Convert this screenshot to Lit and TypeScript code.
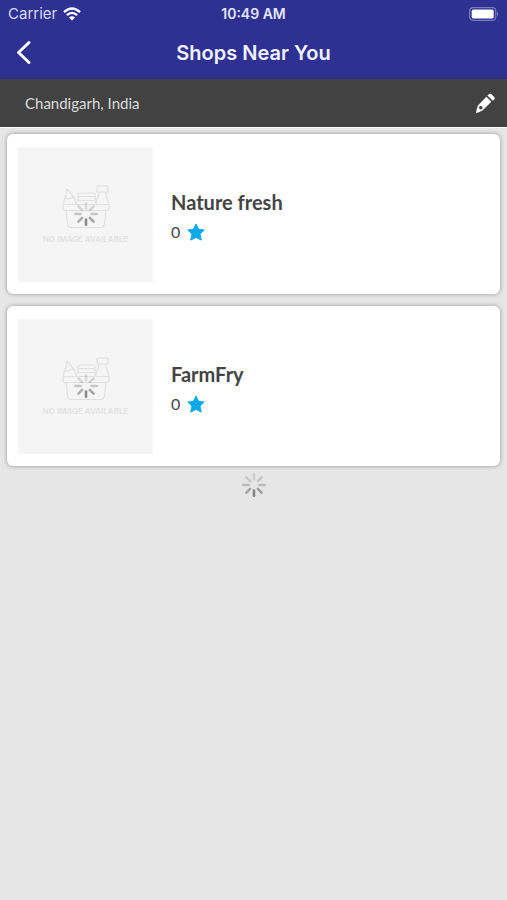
import { LitElement, html, css, svg } from "lit";
import { customElement, property, state } from "lit/decorators.js";

@customElement("activity-spinner")
class ActivitySpinner extends LitElement {
  static styles = css`
    :host {
      display: block;
      width: 26px;
      height: 26px;
    }
    svg {
      display: block;
      width: 100%;
      height: 100%;
    }
  `;

  render() {
    const shades = [0.12, 0.16, 0.22, 0.38, 0.5, 0.34, 0.22, 0.15];
    return html`<svg viewBox="-13 -13 26 26" role="img" aria-label="Loading">
      ${shades.map(
        (o, i) => svg`<path d="M0-5.5V-10.7" transform=${`rotate(${i * 45})`}
          stroke="#222" stroke-opacity=${o} stroke-width="2.6" stroke-linecap="round"/>`
      )}
    </svg>`;
  }
}

@customElement("image-placeholder")
class ImagePlaceholder extends LitElement {
  static styles = css`
    :host {
      display: grid;
      place-items: center;
      box-sizing: border-box;
      width: 135px;
      height: 135px;
      background: #f5f5f5;
    }
    .content {
      position: relative;
      display: flex;
      flex-direction: column;
      align-items: center;
      gap: 4px;
    }
    .basket {
      display: block;
      width: 48px;
      height: 44px;
    }
    .caption {
      font: 600 8px/12px Inter, sans-serif;
      color: #e2e2e2;
      white-space: nowrap;
    }
    activity-spinner {
      position: absolute;
      top: 16px;
      left: calc(50% - 13px);
    }
  `;

  render() {
    return html`<div class="content">
      <svg class="basket" viewBox="0 0 48 44" fill="none" stroke="#e0e0e0" stroke-width="1.2" stroke-linejoin="round" aria-hidden="true">
        <path d="M2 19.500h44q1 0 1 1.500v2.500q0 2-1.500 2H2.500q-1.500 0-1.500-2V21q0-1.500 1-1.500z"/>
        <path d="M4 25.500l1.500 13q.5 4 4 4h29q3.500 0 4-4l1.500-13"/>
        <path d="M14 19.500q0-4 3-4h14q3 0 3 4"/>
        <path d="M16 15.500v-6q0-1.500 1.500-1.500h14q1.500 0 1.500 1.500v6M16 11.500h17"/>
        <path d="M36 1h9q1 0 1 1v4q0 1-1 1h-9q-1 0-1-1V2q0-1 1-1zM36.500 7v4q-2 2.500-3 8.500M44 7v4q2 2.500 3 8.500"/>
        <path d="M1.500 19.500q0-4 1.500-6.500 1.500-4 2-9 3 2.500 5 6 3.500 3.500 4 9.500M3 13q3 2 8-1"/>
      </svg>
      <span class="caption">NO IMAGE AVAILABLE</span>
      <activity-spinner></activity-spinner>
    </div>`;
  }
}

@customElement("shop-card")
class ShopCard extends LitElement {
  @property() name = "";
  @property({ type: Number }) rating = 0;

  static styles = css`
    :host {
      display: block;
    }
    .card {
      display: flex;
      align-items: center;
      gap: 18px;
      box-sizing: border-box;
      padding: 13px 11px 12px;
      background: #fff;
      border-radius: 6px;
      box-shadow: 0 0 4px rgba(0, 0, 0, 0.36);
    }
    .info {
      padding-top: 4px;
    }
    .name {
      margin: 0;
      font: 700 20px/26px Lato, sans-serif;
      color: #444;
    }
    .rating {
      display: flex;
      align-items: center;
      gap: 6px;
      margin-top: 4px;
      font: 400 16px/26px Lato, sans-serif;
      color: #444;
    }
    .star {
      width: 20px;
      height: 20px;
    }
  `;

  render() {
    return html`<article class="card">
      <image-placeholder></image-placeholder>
      <div class="info">
        <h2 class="name">${this.name}</h2>
        <div class="rating">
          <span>${this.rating}</span>
          <svg class="star" viewBox="0 0 20 20" aria-hidden="true">
            <path fill="#0aa9ec" stroke="#0aa9ec" stroke-linejoin="round" d="M10 2l2.500 5.300 5.700.7-4.200 4.100 1.300 6L10 15.400l-5.300 2.700 1.300-6L1.800 8l5.700-.7z"/>
          </svg>
        </div>
      </div>
    </article>`;
  }
}

@customElement("app-root")
class AppRoot extends LitElement {
  @state() private shops = [
    { name: "Nature fresh", rating: 0 },
    { name: "FarmFry", rating: 0 },
  ];

  static styles = css`
    :host {
      display: flex;
      flex-direction: column;
      min-height: 100vh;
      background: #e6e6e6;
      font-family: Inter, sans-serif;
    }
    button {
      display: grid;
      place-items: center;
      padding: 0;
      border: 0;
      background: none;
      color: #fff;
    }
    svg {
      display: block;
    }
    .top {
      background: #2e3192;
      color: #f4f4ff;
    }
    .status,
    .nav {
      display: grid;
      grid-template-columns: 1fr auto 1fr;
      align-items: center;
      padding: 0 8px;
    }
    .status {
      height: 27px;
      font-size: 15px;
      line-height: 20px;
    }
    .carrier {
      display: flex;
      align-items: center;
      gap: 6px;
      color: #d9daf0;
    }
    .time {
      font-size: 14px;
      font-weight: 600;
      color: #e6e7f8;
    }
    .battery {
      justify-self: end;
    }
    .nav {
      height: 52px;
    }
    .back {
      width: 32px;
      height: 40px;
    }
    h1 {
      margin: 0;
      font-size: 20px;
      line-height: 28px;
      font-weight: 600;
    }
    .location {
      display: flex;
      align-items: center;
      justify-content: space-between;
      height: 48px;
      padding: 0 11px 0 25px;
      background: #424242;
      color: #dcdcdc;
      font: 400 15px/20px Lato, sans-serif;
      border-bottom: 1px solid #f8f8f8;
    }
    .shops {
      display: flex;
      flex-direction: column;
      gap: 12px;
      padding: 6px 7px;
    }
    .more {
      align-self: center;
    }
  `;

  render() {
    return html`
      <header class="top">
        <div class="status">
          <div class="carrier">
            <span>Carrier</span>
            <svg width="18" height="14" viewBox="0 0 18 14" fill="none" stroke="#fff" stroke-width="2.300" aria-hidden="true">
              <path d="M1 5.200Q9-2.300 17 5.200M3.900 8.200Q9 3.500 14.100 8.200"/>
              <path d="M9 13.500L6 10.400Q9 8 12 10.400z" fill="#fff" stroke="none"/>
            </svg>
          </div>
          <span class="time">10:49 AM</span>
          <svg class="battery" width="30" height="14" viewBox="0 0 30 14" aria-hidden="true">
            <rect x=".7" y=".7" width="26" height="12.600" rx="3.500" fill="none" stroke="#7a7bbb" stroke-width="1.200"/>
            <rect x="2.700" y="2.500" width="22" height="9" rx="1.800" fill="#fff"/>
            <path d="M27.900 4.500q2.500 2.500 0 5z" fill="#7a7bbb"/>
          </svg>
        </div>
        <nav class="nav">
          <button class="back" aria-label="Back">
            <svg width="18" height="26" viewBox="0 0 18 26" fill="none" stroke="#fff" stroke-width="3" stroke-linecap="round" stroke-linejoin="round">
              <path d="M14 2.500L3.500 12.500l10.500 10"/>
            </svg>
          </button>
          <h1>Shops Near You</h1>
        </nav>
      </header>
      <div class="location">
        <span>Chandigarh, India</span>
        <button aria-label="Edit location">
          <svg width="22" height="22" viewBox="0 0 22 22" fill="#fff">
            <path d="M12.300 4.700l5 5-8.600 8.500q-3 2-6.700 3 .3-4 2-7.700z"/>
            <path d="M13.400 3.600l1.800-1.500q1-.9 2 0l3.200 3.200q.9 1 0 2l-1.700 1.500z"/>
            <circle cx="6.800" cy="15.800" r="1.800" fill="#424242"/>
          </svg>
        </button>
      </div>
      <main class="shops">
        ${this.shops.map((s) => html`<shop-card .name=${s.name} .rating=${s.rating}></shop-card>`)}
      </main>
      <activity-spinner class="more"></activity-spinner>
    `;
  }
}
